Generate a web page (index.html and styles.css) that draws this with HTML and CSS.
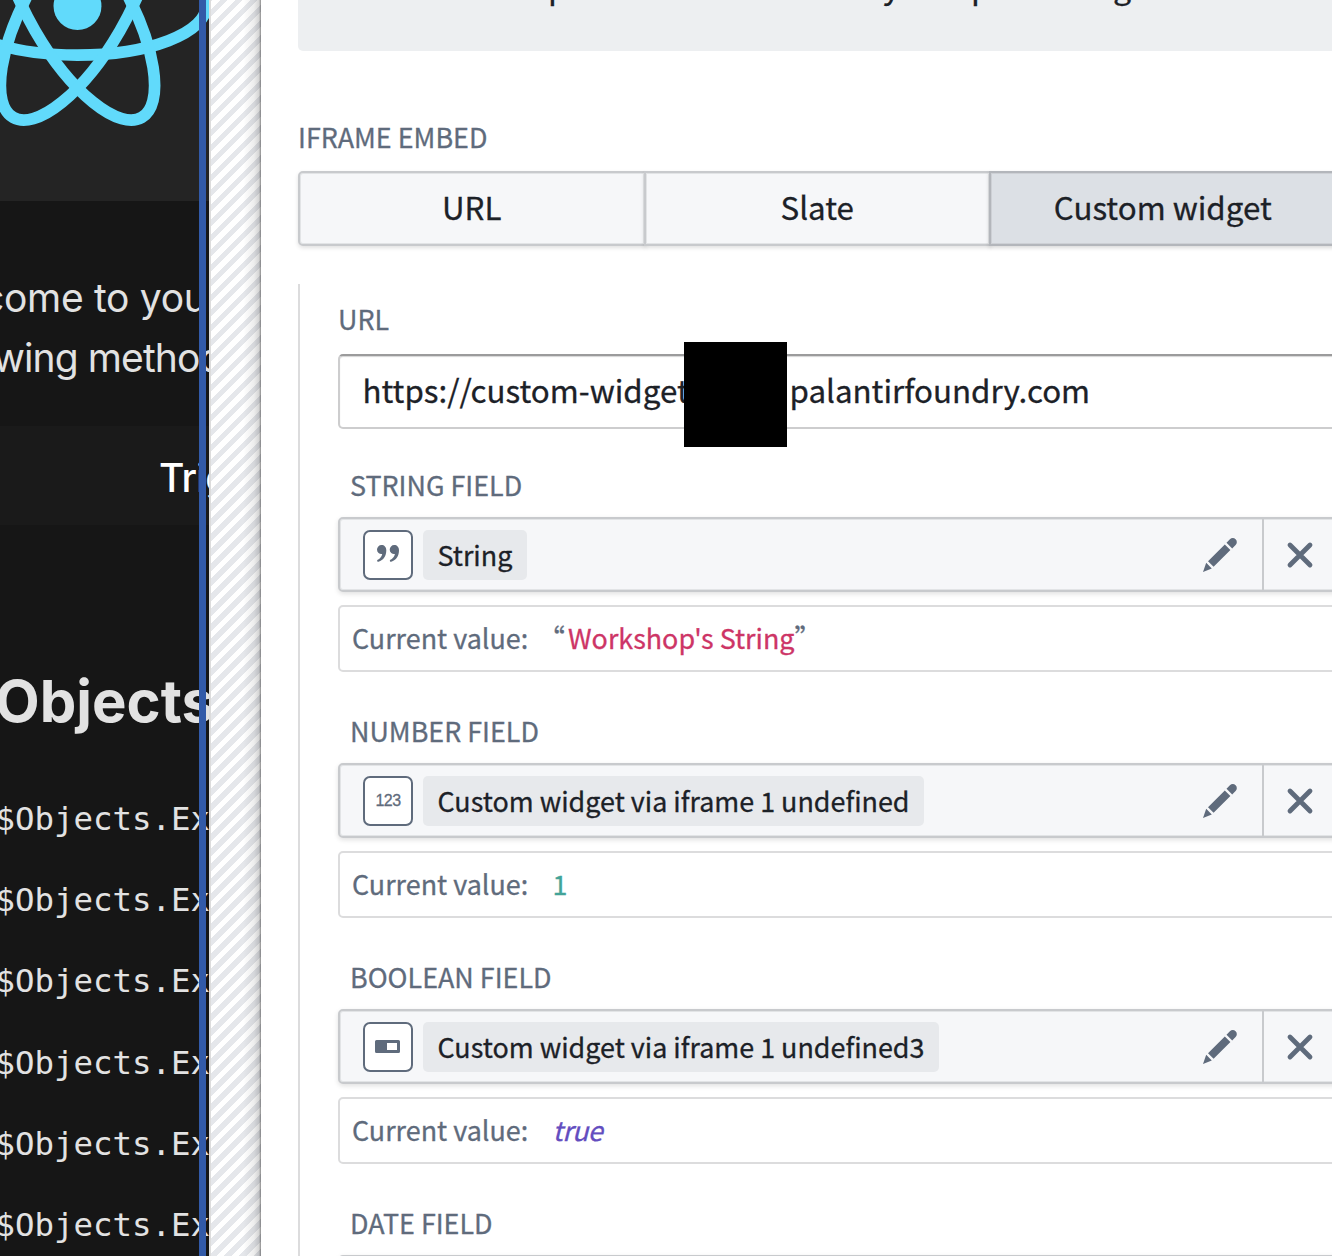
FILE: index.html
```html
<!DOCTYPE html>
<html lang="en">
<head>
<meta charset="utf-8">
<title>Custom widget configuration</title>
<link rel="stylesheet" href="styles.css">
</head>
<body>
<svg class="defs" width="0" height="0">
  <symbol id="edit" viewBox="0 0 36 36"><path d="M1 35l3.2-9.2 5.6 5.6zM6 24.2L22.8 7.4l5.6 5.6L11.6 29.8zM24.5 5.7l3.4-3.4c1.6-1.6 4-1.7 5.7-.1s1.6 4.2 0 5.8l-3.4 3.4z"/></symbol>
  <symbol id="cross" viewBox="0 0 28 28"><path d="M4 4L24 24M24 4L4 24" fill="none" stroke="#5f6b7c" stroke-width="4.8" stroke-linecap="round"/></symbol>
</svg>
<main class="app">
  <section class="preview">
    <header class="hero">
      <svg class="react" viewBox="-11.5 -10.25 23 20.5"><circle r="2.05" fill="#61dafb"/><g fill="none" stroke="#61dafb"><ellipse rx="11" ry="4.2"/><ellipse rx="11" ry="4.2" transform="rotate(60)"/><ellipse rx="11" ry="4.2" transform="rotate(120)"/></g></svg>
    </header>
    <div class="intro"><p class="line-a">come to your</p><p class="line-b">wing methods</p></div>
    <div class="trigger">Trigger</div>
    <h1>Objects</h1>
    <div class="code">
      <p>$Objects.Ex</p><p>$Objects.Ex</p><p>$Objects.Ex</p><p>$Objects.Ex</p><p>$Objects.Ex</p><p>$Objects.Ex</p>
    </div>
    <div class="selection"></div>
  </section>
  <div class="gutter"></div>
  <section class="panel">
    <div class="callout"><span>p</span><span>y</span><span>p</span><span>g</span></div>
    <div class="label">IFRAME EMBED</div>
    <div class="tabs"><div class="tab">URL</div><div class="tab">Slate</div><div class="tab active">Custom widget</div></div>
    <div class="settings">
      <div class="label url-label">URL</div>
      <div class="input"><span class="host">https://custom-widget</span><span class="domain">palantirfoundry.com</span><div class="redaction"></div></div>
      <div class="field">
        <div class="label">STRING FIELD</div>
        <div class="control"><div class="variable"><div class="type quote"><svg width="24" height="20" viewBox="0 0 24 20"><g fill="#5f6b7c"><path d="M5.5 1A4.6 4.6 0 0 0 1 5.6a4.3 4.3 0 0 0 5.2 4.3C5.7 12.6 4 14.7 1.3 16c-.5.9.2 2 1.2 1.8C7.6 16.3 10.3 11.8 10.3 6.3 10.3 3 8.3 1 5.5 1z"/><path d="M18.2 1a4.6 4.6 0 0 0-4.5 4.6 4.3 4.3 0 0 0 5.2 4.3c-.5 2.7-2.2 4.8-4.9 6.1-.5.9.2 2 1.2 1.8C20.3 16.3 23 11.8 23 6.3 23 3 21 1 18.2 1z"/></g></svg></div><span class="tag">String</span><svg class="edit"><use href="#edit"/></svg></div><div class="clear"><svg class="cross"><use href="#cross"/></svg></div></div>
        <div class="value"><span>Current value:</span><span class="result text">“<b class="string">Workshop's String</b>”</span></div>
      </div>
      <div class="field">
        <div class="label">NUMBER FIELD</div>
        <div class="control"><div class="variable"><div class="type digits">123</div><span class="tag">Custom widget via iframe 1 undefined</span><svg class="edit"><use href="#edit"/></svg></div><div class="clear"><svg class="cross"><use href="#cross"/></svg></div></div>
        <div class="value"><span>Current value:</span><span class="result number">1</span></div>
      </div>
      <div class="field">
        <div class="label">BOOLEAN FIELD</div>
        <div class="control"><div class="variable"><div class="type"><svg width="26" height="14" viewBox="0 0 26 14"><path fill="#5f6b7c" fill-rule="evenodd" d="M1.500 0h22A1.500 1.500 0 0 1 25 1.500v10a1.500 1.500 0 0 1-1.500 1.500h-22A1.500 1.500 0 0 1 0 11.500v-10A1.500 1.500 0 0 1 1.500 0zM12 3v7h10V3z"/></svg></div><span class="tag">Custom widget via iframe 1 undefined3</span><svg class="edit"><use href="#edit"/></svg></div><div class="clear"><svg class="cross"><use href="#cross"/></svg></div></div>
        <div class="value"><span>Current value:</span><span class="result boolean">true</span></div>
      </div>
      <div class="field">
        <div class="label">DATE FIELD</div>
        <div class="control"><div class="variable"></div><div class="clear"></div></div>
      </div>
    </div>
  </section>
</main>
</body>
</html>
```
FILE: styles.css
```css
* { box-sizing: border-box; }
body { margin: 0; overflow: hidden; }
p, h1 { margin: 0; white-space: nowrap; }
.defs { position: absolute; }
.app { display: flex; width: 1332px; height: 1256px; overflow: hidden; background: #fff; }

.preview { position: relative; width: 209px; flex: none; overflow: hidden; background: #161616; color: #e2e2e2; font-family: Inter, sans-serif; }
.hero { height: 201px; background: #242424; overflow: hidden; }
.react { display: block; width: 269px; height: 240px; margin: -114.500px 0 0 -57.400px; }
.intro { height: 225px; padding-top: 67px; font-size: 39px; line-height: 60px; }
.line-a { margin-left: -18px; letter-spacing: -.300px; }
.line-b { margin-left: -7px; letter-spacing: -.900px; }
.trigger { height: 99px; padding: 2px 0 0 159px; background: #1a1a1a; color: #fff; font-size: 39px; font-weight: 500; line-height: 99px; letter-spacing: -.800px; }
h1 { height: 253px; padding-top: 141px; margin-left: -5px; font-size: 58px; line-height: 70px; font-weight: 700; letter-spacing: 0; }
.code { padding-top: 1px; font: 32.400px/81.200px "DejaVu Sans Mono", monospace; margin-left: -4.500px; }
.selection { position: absolute; top: 0; bottom: 0; left: 199px; width: 7px; background: #325aa8; }

.gutter { flex: none; width: 52px; border-left: 2px solid #dcdcdc; background: linear-gradient(to left, #00000073 0, #0000002b 2px, #00000012 7px, transparent 18px), repeating-linear-gradient(-45deg, #e5e7eb 0 5.300px, #fff 5.300px 10.600px); }

.panel { flex: 1; min-width: 0; padding-left: 37px; color: #1c2127; font-family: "Noto Sans CJK SC", sans-serif; font-size: 26.900px; white-space: nowrap; -webkit-text-stroke: .3px currentColor; }
.callout { display: grid; grid-template-columns: 335px 88px 142px 1fr; height: 51px; padding-left: 250px; border-radius: 0 0 0 5px; background: #edeff1; overflow: hidden; font-size: 32px; line-height: 40px; }
.callout span { margin-top: -35px; }
.label { height: 30px; line-height: 32px; color: #5f6b7c; }
.callout + .label { margin-top: 70px; }
.tabs { display: flex; width: 1040px; height: 75px; margin-top: 20px; font-size: 31.300px; }
.tab { flex: none; width: 347.500px; margin-right: -2px; padding-bottom: 5px; display: flex; align-items: center; justify-content: center; border: 2px solid #c8cacd; background: #f6f7f9; box-shadow: inset 0 0 0 1px #e2e4e6, 0 2px 4px #0000001f; }
.tab:first-child { border-radius: 5px 0 0 5px; }
.active { background: #dce0e5; border-color: #b3b6bb; box-shadow: inset 0 0 0 1px #cdd0d5, 0 2px 4px #00000026; }
.settings { height: 972px; margin-top: 38px; padding: 19px 0 0 38px; border-left: 2px solid #dcdcdd; }
.input { position: relative; display: flex; align-items: center; width: 1010px; height: 75px; margin-top: 21px; padding: 0 0 5px 22.500px; border: 2px solid #cdcdce; border-top-color: #9b9b9c; border-radius: 5px; box-shadow: inset 0 1px 1px #0000002b; font-size: 31.300px; }
.host { width: 427px; }
.redaction { position: absolute; left: 344px; top: -14px; width: 103px; height: 105px; background: #000; }
.field { height: 246px; }
.input + .field { margin-top: 40px; }
.field .label { padding-left: 12px; }
.control { display: flex; width: 1010px; height: 75px; margin-top: 18px; border: 2px solid #c8cacd; border-radius: 5px; background: #f6f7f9; box-shadow: inset 0 0 0 1px #e2e4e6, 0 2px 5px #0000001f; }
.variable { display: flex; align-items: center; width: 924px; padding-left: 23px; border-right: 2px solid #c8cacd; }
.type { display: flex; align-items: center; justify-content: center; width: 50px; height: 50px; border: 2px solid #5f6b7c; border-radius: 7px; background: #fff; }
.quote { padding-bottom: 2px; }
.digits { color: #5f6b7c; font: 16px "Liberation Sans", sans-serif; letter-spacing: -.6px; }
.tag { height: 50px; margin-left: 10px; padding: 0 14.500px; border-radius: 5px; background: #e7e9ec; line-height: 50px; }
.edit { width: 36px; height: 36px; margin: 0 24px 0 auto; fill: #5f6b7c; }
.clear { padding: 22px; }
.cross { display: block; width: 28px; height: 28px; }
.value { display: flex; width: 1010px; height: 67px; margin-top: 13px; padding-left: 12px; border: 2px solid #dcdcdd; border-radius: 5px; color: #5f6b7c; line-height: 62px; }
.result { margin-left: 24.500px; }
.text { margin-left: 10px; }
.string { margin-left: 3px; color: #cd3566; font-weight: 400; }
.number { color: #43a398; }
.boolean { color: #634dbf; font-style: italic; letter-spacing: -.6px; }
```
